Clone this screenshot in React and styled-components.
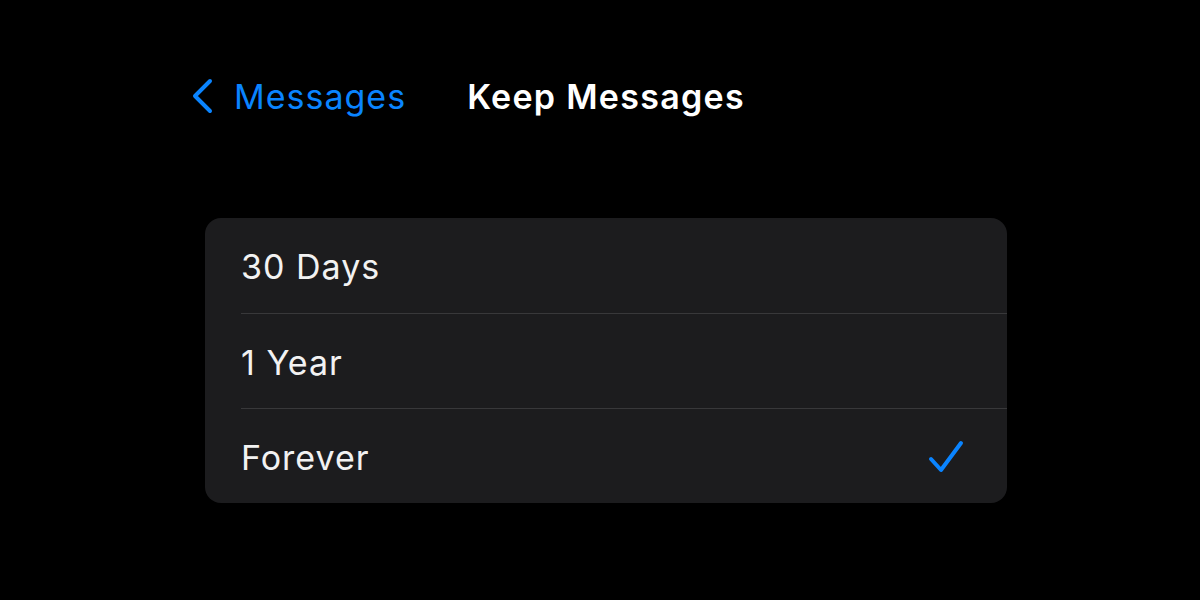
import React from "react"
import styled, { createGlobalStyle } from "styled-components"

const GlobalStyle = createGlobalStyle`
  html, body {
    margin: 0;
    padding: 0;
    background: #000;
  }
  body {
    font-family: Inter, "Noto Sans", sans-serif;
    -webkit-font-smoothing: antialiased;
  }
`

const Screen = styled.div`
  width: 1200px;
  height: 600px;
  background: #000;
  display: flex;
  flex-direction: column;
  padding: 74px 0 0 189px;
  box-sizing: border-box;
`

const NavBar = styled.div`
  display: flex;
  align-items: center;
  height: 44px;
`

const BackButton = styled.div`
  display: flex;
  align-items: center;
  gap: 19px;
  color: #0a84ff;
  font-size: 34px;
  letter-spacing: 1px;
`

const Title = styled.div`
  margin-left: 61px;
  color: #fff;
  font-size: 34px;
  font-weight: 600;
  letter-spacing: 1.3px;
`

const Card = styled.div`
  margin: 100px 0 0 16px;
  width: 802px;
  background: #1c1c1e;
  border-radius: 16px;
  overflow: hidden;
`

const Row = styled.div`
  display: flex;
  align-items: center;
  justify-content: space-between;
  height: 95px;
  margin-left: 36px;
  padding: 2px 42px 0 0;
  box-sizing: border-box;
  border-top: ${p => (p.first ? "none" : "1.5px solid #38383a")};
  color: #f2f2f2;
  font-size: 34px;
  letter-spacing: 1px;
`

const options = [
  { label: "30 Days", selected: false },
  { label: "1 Year", selected: false },
  { label: "Forever", selected: true },
]

const Chevron = () => (
  <svg width="26" height="38" viewBox="0 0 26 38">
    <path
      d="M21 4 L6 19 L21 34"
      fill="none"
      stroke="#0a84ff"
      strokeWidth="4"
      strokeLinecap="round"
      strokeLinejoin="round"
    />
  </svg>
)

const Check = () => (
  <svg width="38" height="38" viewBox="0 0 38 38">
    <path
      d="M4 21 L14 32 L34 5"
      fill="none"
      stroke="#0a84ff"
      strokeWidth="4"
      strokeLinecap="round"
      strokeLinejoin="round"
    />
  </svg>
)

const App = () => (
  <>
    <GlobalStyle />
    <Screen>
      <NavBar>
        <BackButton>
          <Chevron />
          <span>Messages</span>
        </BackButton>
        <Title>Keep Messages</Title>
      </NavBar>
      <Card>
        {options.map((option, i) => (
          <Row key={option.label} first={i === 0}>
            <span>{option.label}</span>
            {option.selected && <Check />}
          </Row>
        ))}
      </Card>
    </Screen>
  </>
)

export default App
